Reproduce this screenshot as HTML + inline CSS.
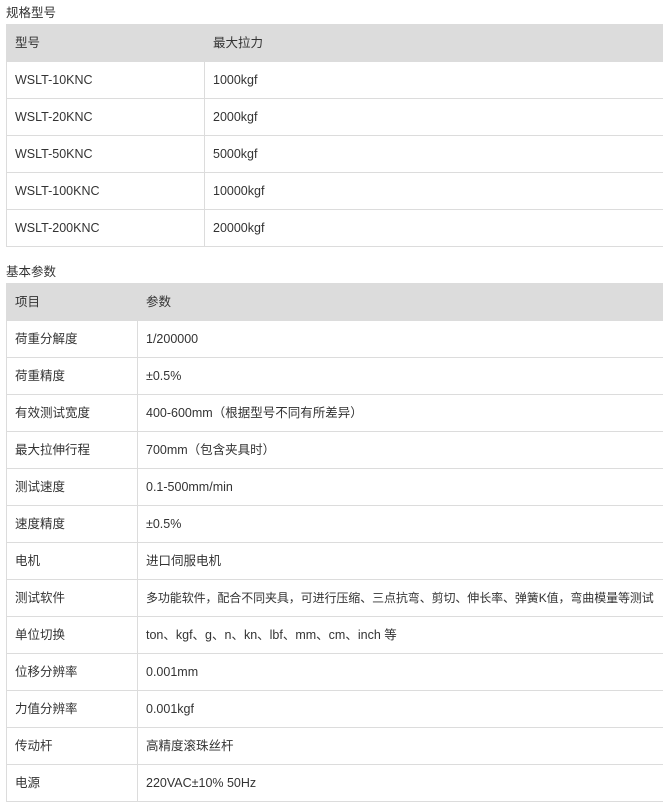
<!DOCTYPE html>
<html><head><meta charset="utf-8"><style>
body{margin:0;background:#fff;font-family:"Liberation Sans","Noto Sans CJK SC",sans-serif;font-size:12.5px;color:#333;width:663px;height:810px;overflow:hidden;position:relative}
.t{position:absolute;left:6px;font-size:12.5px;color:#333;line-height:16px}
table{position:absolute;left:6px;border-collapse:collapse;width:700px;table-layout:fixed}
td{border:1px solid #dcdcdc;height:36px;padding:0 0 0 8px;white-space:nowrap;vertical-align:middle;line-height:16px}
td span{display:inline-block;height:16px;line-height:16px;vertical-align:middle}
tr.h td{background:#dcdcdc;border-color:#dcdcdc}
tr.h td+td{border-left:1px solid #eee}
.s{font-size:12px;letter-spacing:-0.1px}
</style></head><body>
<div class="t" style="top:5px">规格型号</div>
<table style="top:24px"><col style="width:198px"><col>
<tr class="h"><td>型号</td><td>最大拉力</td></tr>
<tr><td>WSLT-10KNC</td><td>1000kgf</td></tr>
<tr><td>WSLT-20KNC</td><td>2000kgf</td></tr>
<tr><td>WSLT-50KNC</td><td>5000kgf</td></tr>
<tr><td>WSLT-100KNC</td><td>10000kgf</td></tr>
<tr><td>WSLT-200KNC</td><td>20000kgf</td></tr>
</table>
<div class="t" style="top:264px">基本参数</div>
<table style="top:283px"><col style="width:131px"><col>
<tr class="h"><td>项目</td><td>参数</td></tr>
<tr><td>荷重分解度</td><td>1/200000</td></tr>
<tr><td>荷重精度</td><td>±0.5%</td></tr>
<tr><td>有效测试宽度</td><td>400-600mm（根据型号不同有所差异）</td></tr>
<tr><td>最大拉伸行程</td><td>700mm（包含夹具时）</td></tr>
<tr><td>测试速度</td><td>0.1-500mm/min</td></tr>
<tr><td>速度精度</td><td>±0.5%</td></tr>
<tr><td>电机</td><td>进口伺服电机</td></tr>
<tr><td>测试软件</td><td class="s">多功能软件，配合不同夹具，可进行压缩、三点抗弯、剪切、伸长率、弹簧K值，弯曲模量等测试</td></tr>
<tr><td>单位切换</td><td>ton、kgf、g、n、kn、lbf、mm、cm、inch 等</td></tr>
<tr><td>位移分辨率</td><td>0.001mm</td></tr>
<tr><td>力值分辨率</td><td>0.001kgf</td></tr>
<tr><td>传动杆</td><td>高精度滚珠丝杆</td></tr>
<tr><td>电源</td><td>220VAC±10% 50Hz</td></tr>
</table>
</body></html>
